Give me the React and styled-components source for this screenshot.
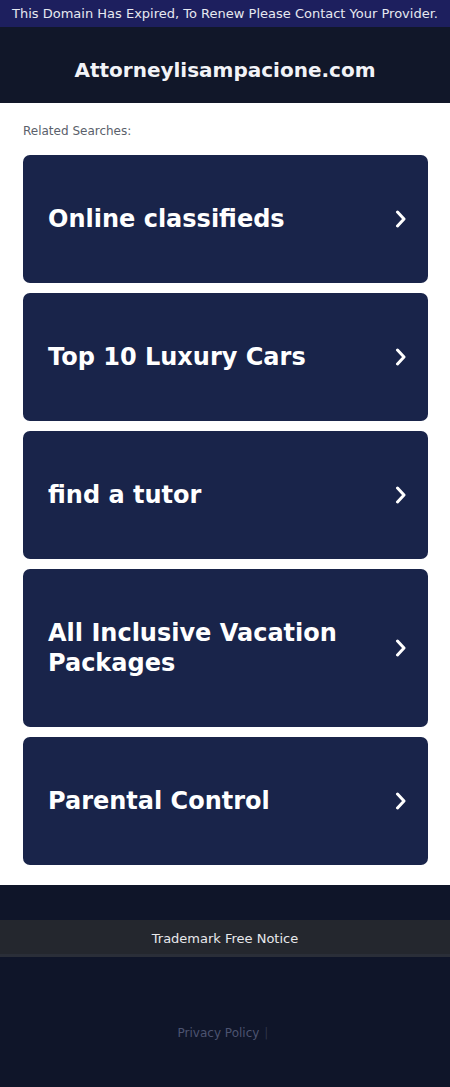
import React from 'react'
import { createGlobalStyle, styled } from 'styled-components'

const GlobalStyle = createGlobalStyle`
  body {
    margin: 0;
    font-family: "DejaVu Sans", "Liberation Sans", sans-serif;
    background: #0f1529;
  }
`

const searches = [
  'Online classifieds',
  'Top 10 Luxury Cars',
  'find a tutor',
  'All Inclusive Vacation Packages',
  'Parental Control',
]

export default function App() {
  return (
    <>
      <GlobalStyle />
      <Notice>This Domain Has Expired, To Renew Please Contact Your Provider.</Notice>
      <Header>
        <Title>Attorneylisampacione.com</Title>
      </Header>
      <Main>
        <Label>Related Searches:</Label>
        <List>
          {searches.map((s) => (
            <Card key={s} href="#">
              <CardText>{s}</CardText>
              <Chevron viewBox="0 0 14 18">
                <polyline points="3.5,2 10,9 3.5,16" />
              </Chevron>
            </Card>
          ))}
        </List>
      </Main>
      <Footer>
        <Trademark>Trademark Free Notice</Trademark>
        <Links>
          <PolicyLink href="#">Privacy Policy</PolicyLink>
          <Sep>|</Sep>
        </Links>
      </Footer>
    </>
  )
}

const Notice = styled.div`
  height: 27px;
  background: #1d1f5e;
  color: #e6e8f0;
  font-size: 13px;
  line-height: 27px;
  text-align: center;
  white-space: nowrap;
`

const Header = styled.div`
  height: 76px;
  box-sizing: border-box;
  padding-top: 10px;
  background: #111729;
  display: flex;
  align-items: center;
  justify-content: center;
`

const Title = styled.h1`
  margin: 0;
  color: #f2f3f7;
  font-size: 20px;
  font-weight: bold;
`

const Main = styled.div`
  background: #fff;
  padding: 21px 22px 20px 23px;
`

const Label = styled.div`
  color: #5b5f6b;
  font-size: 12px;
  line-height: 14px;
  margin-bottom: 17px;
`

const List = styled.div`
  display: flex;
  flex-direction: column;
  gap: 10px;
`

const Card = styled.a`
  display: flex;
  align-items: center;
  justify-content: space-between;
  gap: 20px;
  padding: 49px 20px 49px 25px;
  background: #19244a;
  border-radius: 7px;
  text-decoration: none;
`

const CardText = styled.span`
  color: #fff;
  font-size: 24px;
  font-weight: bold;
  line-height: 30px;
`

const Chevron = styled.svg`
  width: 14px;
  height: 18px;
  flex: none;
  fill: none;
  stroke: #fff;
  stroke-width: 3;
  stroke-linecap: round;
  stroke-linejoin: round;
`

const Footer = styled.div`
  background: #0f1529;
  padding: 35px 0 0;
  height: 202px;
  box-sizing: border-box;
`

const Trademark = styled.div`
  height: 37px;
  padding-top: 1px;
  background: #24272e;
  border-bottom: 3px solid #2a2e38;
  box-sizing: border-box;
  color: #e8e9ec;
  font-size: 13px;
  line-height: 35px;
  text-align: center;
`

const Links = styled.div`
  margin-top: 69px;
  text-align: center;
  font-size: 12px;
  line-height: 14px;
  color: #4c5370;
`

const PolicyLink = styled.a`
  color: #4c5370;
  text-decoration: none;
`

const Sep = styled.span`
  margin-left: 5px;
  padding-right: 4px;
  color: #2e3348;
`
